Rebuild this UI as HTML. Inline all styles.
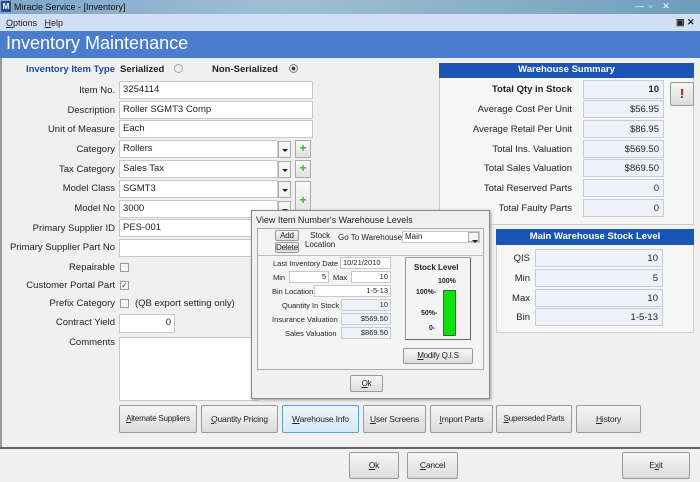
<!DOCTYPE html>
<html><head><style>
*{box-sizing:border-box;margin:0;padding:0}
body{width:700px;height:482px;overflow:hidden;background:#f0f0f0;font-family:"Liberation Sans",sans-serif;font-size:9px;color:#222;position:relative}
.a{position:absolute}
.lb{position:absolute;text-align:right;font-size:9.5px;white-space:nowrap}
.in{position:absolute;background:#fff;border:1px solid #c8c8c8;font-size:9.5px;padding:2px 3px;white-space:nowrap;overflow:hidden}
.ro{position:absolute;background:#eef2f8;border:1px solid #c8ccd4;text-align:right;padding:3px 4px;font-size:9.5px}
.dd{position:absolute;width:13px;height:17px;background:#f4f4f4;border:1px solid #aaa}
.dd:after{content:"";position:absolute;left:3px;top:7px;border:3px solid transparent;border-top:3px solid #222}
.pl{position:absolute;background:linear-gradient(#fafafa,#e0e0e0);border:1px solid #aaa;color:#4a4;font-weight:bold;text-align:center;font-size:12px}
.btn{position:absolute;background:linear-gradient(#f6f6f6,#dcdcdc);border:1px solid #999;text-align:center;font-size:8.5px;border-radius:2px;white-space:nowrap;overflow:hidden;letter-spacing:-0.2px}
.cb{position:absolute;width:9px;height:9px;border:1px solid #999;background:#f4f4f4}
</style></head><body>
<div class="a" style="left:0;top:0;width:700px;height:14px;background:linear-gradient(90deg,#7fa6c8,#9dc0d8 40%,#88b0c8 70%,#6f9dbb)"></div>
<div class="a" style="left:1px;top:1px;width:10px;height:11px;background:#2a4a8a;color:#fff;font-size:8px;font-weight:bold;text-align:center;line-height:11px">M</div>
<div class="a" style="left:14px;top:2px;font-size:9px;color:#111">Miracle Service - [Inventory]</div>
<div class="a" style="left:635px;top:1px;font-size:9px;color:#fff">—&nbsp;&nbsp;▫&nbsp;&nbsp;&nbsp;&nbsp;✕</div>
<div class="a" style="left:0;top:14px;width:700px;height:17px;background:#d0e0f2"></div>
<div class="a" style="left:6px;top:18px;font-size:9px"><u>O</u>ptions&nbsp;&nbsp; <u>H</u>elp</div>
<div class="a" style="left:676px;top:17px;font-size:9px;font-weight:bold">▣ ✕</div>
<div class="a" style="left:0;top:31px;width:700px;height:27px;background:#4a7dcd;color:#fff;font-size:18px;padding:2px 6px">Inventory Maintenance</div>
<div class="a" style="left:0;top:58px;width:2px;height:390px;background:#999"></div>

<div class="lb" style="right:585px;top:64px;color:#1a4a9a;font-weight:bold">Inventory Item Type</div>
<div class="a" style="left:120px;top:64px;font-weight:bold;font-size:9.5px">Serialized</div>
<div class="a" style="left:174px;top:64px;width:9px;height:9px;border-radius:50%;border:1px solid #aaa;background:#eee"></div>
<div class="a" style="left:212px;top:64px;font-weight:bold;font-size:9.5px">Non-Serialized</div>
<div class="a" style="left:289px;top:64px;width:9px;height:9px;border-radius:50%;border:1px solid #888;background:radial-gradient(#333 30%,#ddd 40%)"></div>

<div class="lb" style="right:585px;top:85px">Item No.</div><div class="in" style="left:119px;top:81px;width:194px;height:18px">3254114</div>
<div class="lb" style="right:585px;top:105px">Description</div><div class="in" style="left:119px;top:101px;width:194px;height:18px">Roller SGMT3 Comp</div>
<div class="lb" style="right:585px;top:124px">Unit of Measure</div><div class="in" style="left:119px;top:120px;width:194px;height:18px">Each</div>
<div class="lb" style="right:585px;top:144px">Category</div><div class="in" style="left:119px;top:140px;width:159px;height:18px">Rollers</div><div class="dd" style="left:278px;top:141px"></div><div class="pl" style="left:295px;top:140px;width:16px;height:18px">+</div>
<div class="lb" style="right:585px;top:164px">Tax Category</div><div class="in" style="left:119px;top:160px;width:159px;height:18px">Sales Tax</div><div class="dd" style="left:278px;top:161px"></div><div class="pl" style="left:295px;top:160px;width:16px;height:18px">+</div>
<div class="lb" style="right:585px;top:183px">Model Class</div><div class="in" style="left:119px;top:180px;width:159px;height:18px">SGMT3</div><div class="dd" style="left:278px;top:181px"></div><div class="pl" style="left:295px;top:181px;width:16px;height:38px;line-height:36px">+</div>
<div class="lb" style="right:585px;top:203px">Model No</div><div class="in" style="left:119px;top:200px;width:159px;height:18px">3000</div><div class="dd" style="left:278px;top:201px"></div>
<div class="lb" style="right:585px;top:223px">Primary Supplier ID</div><div class="in" style="left:119px;top:219px;width:194px;height:18px">PES-001</div>
<div class="lb" style="right:585px;top:242px">Primary Supplier Part No</div><div class="in" style="left:119px;top:239px;width:194px;height:18px"></div>
<div class="lb" style="right:585px;top:262px">Repairable</div><div class="cb" style="left:120px;top:263px"></div>
<div class="lb" style="right:585px;top:280px">Customer Portal Part</div><div class="cb" style="left:120px;top:281px;font-size:8px;line-height:7px;color:#446">✓</div>
<div class="lb" style="right:585px;top:298px">Prefix Category</div><div class="cb" style="left:120px;top:299px"></div><div class="a" style="left:135px;top:298px;font-size:9.5px">(QB export setting only)</div>
<div class="lb" style="right:585px;top:317px">Contract Yield</div><div class="in" style="left:119px;top:314px;width:56px;height:19px;text-align:right">0</div>
<div class="lb" style="right:585px;top:337px">Comments</div><div class="in" style="left:119px;top:337px;width:140px;height:64px"></div>

<div class="a" style="left:439px;top:63px;width:255px;height:162px;background:#f6f6f6;border:1px solid #ccc"></div>
<div class="a" style="left:439px;top:63px;width:255px;height:15px;background:#1a55b3;color:#fff;font-weight:bold;text-align:center;font-size:9.5px;line-height:14px">Warehouse Summary</div>
<div class="lb" style="right:128px;top:84px;font-weight:bold">Total Qty in Stock</div><div class="ro" style="left:583px;top:80px;width:81px;height:19px;font-weight:bold">10</div>
<div class="lb" style="right:128px;top:104px">Average Cost Per Unit</div><div class="ro" style="left:583px;top:100px;width:81px;height:18px">$56.95</div>
<div class="lb" style="right:128px;top:124px">Average Retail Per Unit</div><div class="ro" style="left:583px;top:120px;width:81px;height:18px">$86.95</div>
<div class="lb" style="right:128px;top:144px">Total Ins. Valuation</div><div class="ro" style="left:583px;top:140px;width:81px;height:18px">$569.50</div>
<div class="lb" style="right:128px;top:163px">Total Sales Valuation</div><div class="ro" style="left:583px;top:159px;width:81px;height:18px">$869.50</div>
<div class="lb" style="right:128px;top:183px">Total Reserved Parts</div><div class="ro" style="left:583px;top:179px;width:81px;height:18px">0</div>
<div class="lb" style="right:128px;top:203px">Total Faulty Parts</div><div class="ro" style="left:583px;top:199px;width:81px;height:18px">0</div>
<div class="btn" style="left:670px;top:82px;width:24px;height:24px;color:#c00;font-weight:bold;font-size:13px;line-height:22px">!</div>

<div class="a" style="left:496px;top:229px;width:198px;height:104px;background:#f6f6f6;border:1px solid #ccc"></div>
<div class="a" style="left:496px;top:229px;width:198px;height:16px;background:#1a55b3;color:#fff;font-weight:bold;text-align:center;font-size:9.5px;line-height:15px">Main Warehouse Stock Level</div>
<div class="lb" style="right:170px;top:253px">QIS</div><div class="ro" style="left:535px;top:249px;width:128px;height:18px">10</div>
<div class="lb" style="right:170px;top:273px">Min</div><div class="ro" style="left:535px;top:269px;width:128px;height:18px">5</div>
<div class="lb" style="right:170px;top:293px">Max</div><div class="ro" style="left:535px;top:289px;width:128px;height:18px">10</div>
<div class="lb" style="right:170px;top:312px">Bin</div><div class="ro" style="left:535px;top:308px;width:128px;height:18px">1-5-13</div>

<div class="a" style="left:251px;top:210px;width:239px;height:189px;background:#eef0f2;border:1px solid #888;box-shadow:1px 1px 3px #999"></div>
<div class="a" style="left:256px;top:215px;font-size:9px">View Item Number's Warehouse Levels</div>
<div class="a" style="left:257px;top:228px;width:227px;height:142px;border:1px solid #aaa;background:#f4f4f4"></div>
<div class="a" style="left:257px;top:255px;width:227px;height:1px;background:#bbb"></div>
<div class="btn" style="left:275px;top:230px;width:24px;height:11px;font-size:8px;line-height:9px">Add</div>
<div class="btn" style="left:275px;top:242px;width:24px;height:11px;font-size:8px;line-height:9px">Delete</div>
<div class="a" style="left:305px;top:231px;font-size:8px;line-height:9px;text-align:center">Stock<br>Location</div>
<div class="a" style="left:338px;top:233px;font-size:8px">Go To Warehouse</div>
<div class="in" style="left:402px;top:231px;width:78px;height:12px;font-size:8px;padding:0 2px">Main</div>
<div class="dd" style="left:468px;top:232px;height:10px;width:11px"></div>
<div class="a" style="left:273px;top:259px;font-size:7.5px">Last Inventory Date</div><div class="in" style="left:340px;top:257px;width:51px;height:12px;font-size:7.5px;padding:0 2px">10/21/2010</div>
<div class="a" style="left:273px;top:273px;font-size:7.5px">Min</div><div class="in" style="left:289px;top:271px;width:40px;height:12px;font-size:7.5px;padding:0 2px;text-align:right">5</div>
<div class="a" style="left:333px;top:273px;font-size:7.5px">Max</div><div class="in" style="left:351px;top:271px;width:40px;height:12px;font-size:7.5px;padding:0 2px;text-align:right">10</div>
<div class="a" style="left:272px;top:287px;font-size:7.5px">Bin Location</div><div class="in" style="left:314px;top:285px;width:77px;height:12px;font-size:7.5px;padding:0 2px;text-align:right">1-5-13</div>
<div class="a" style="left:282px;top:301px;font-size:7.5px">Quantity In Stock</div><div class="ro" style="left:341px;top:299px;width:50px;height:12px;font-size:7.5px;padding:0 2px">10</div>
<div class="a" style="left:272px;top:315px;font-size:7.5px">Insurance Valuation</div><div class="ro" style="left:341px;top:313px;width:50px;height:12px;font-size:7.5px;padding:0 2px">$569.50</div>
<div class="a" style="left:285px;top:329px;font-size:7.5px">Sales Valuation</div><div class="ro" style="left:341px;top:327px;width:50px;height:12px;font-size:7.5px;padding:0 2px">$869.50</div>
<div class="a" style="left:405px;top:257px;width:66px;height:83px;border:1px solid #999;border-right-color:#666;border-bottom-color:#666"></div>
<div class="a" style="left:414px;top:263px;font-size:8px;font-weight:bold">Stock Level</div>
<div class="a" style="left:438px;top:278px;font-size:7px;font-weight:bold">100%</div>
<div class="a" style="left:416px;top:289px;font-size:7px;font-weight:bold">100%-</div>
<div class="a" style="left:421px;top:310px;font-size:7px;font-weight:bold">50%-</div>
<div class="a" style="left:429px;top:325px;font-size:7px;font-weight:bold">0-</div>
<div class="a" style="left:443px;top:290px;width:13px;height:46px;background:#0ce10c;border:1px solid #555"></div>
<div class="btn" style="left:403px;top:348px;width:70px;height:16px;font-size:8px;line-height:14px"><u>M</u>odify Q.I.S</div>
<div class="btn" style="left:350px;top:375px;width:33px;height:17px;font-size:8px;line-height:15px"><u>O</u>k</div>

<div class="btn" style="left:119px;top:405px;width:78px;height:28px;line-height:26px;font-size:8px"><u>A</u>lternate Suppliers</div>
<div class="btn" style="left:201px;top:405px;width:77px;height:28px;line-height:26px"><u>Q</u>uantity Pricing</div>
<div class="btn" style="left:282px;top:405px;width:77px;height:28px;line-height:26px;border-color:#5aa0d0;background:linear-gradient(#eef6fc,#d8e8f4)"><u>W</u>arehouse Info</div>
<div class="btn" style="left:363px;top:405px;width:63px;height:28px;line-height:26px"><u>U</u>ser Screens</div>
<div class="btn" style="left:430px;top:405px;width:63px;height:28px;line-height:26px"><u>I</u>mport Parts</div>
<div class="btn" style="left:496px;top:405px;width:76px;height:28px;line-height:26px;font-size:8px"><u>S</u>uperseded Parts</div>
<div class="btn" style="left:576px;top:405px;width:65px;height:28px;line-height:26px"><u>H</u>istory</div>

<div class="a" style="left:0;top:447px;width:700px;height:2px;background:#666"></div>
<div class="btn" style="left:349px;top:452px;width:50px;height:27px;line-height:25px"><u>O</u>k</div>
<div class="btn" style="left:407px;top:452px;width:51px;height:27px;line-height:25px"><u>C</u>ancel</div>
<div class="btn" style="left:622px;top:452px;width:68px;height:27px;line-height:25px">E<u>x</u>it</div>
</body></html>
